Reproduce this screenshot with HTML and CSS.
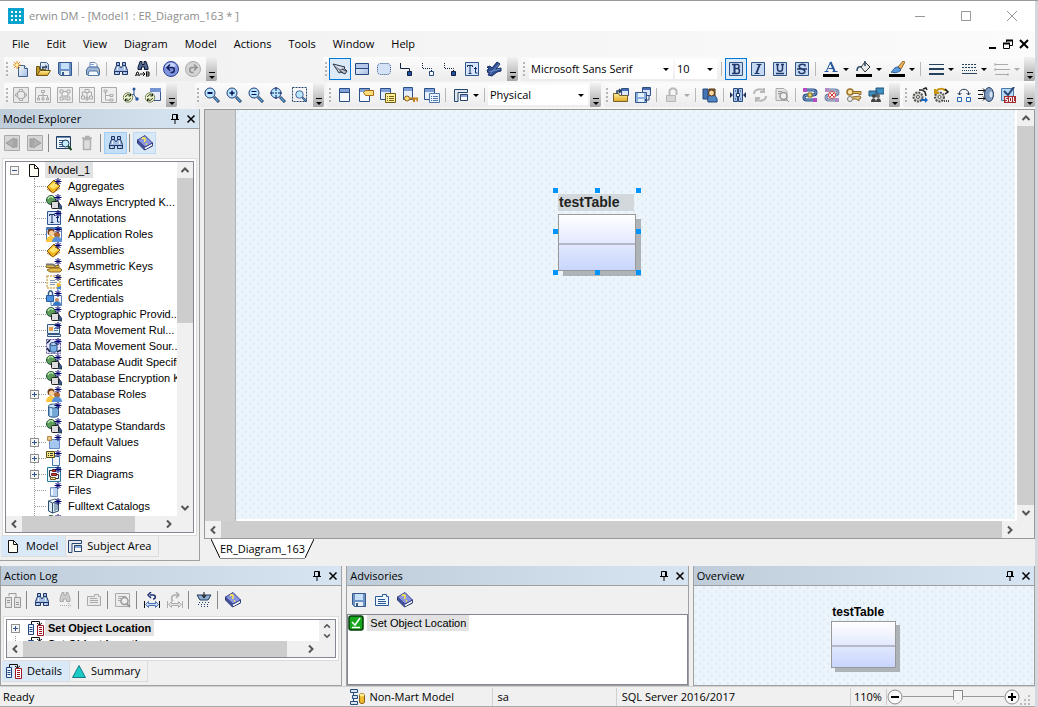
FILE: index.html
```html
<!DOCTYPE html>
<html lang="en">
<head>
<meta charset="utf-8">
<title>erwin DM - [Model1 : ER_Diagram_163 * ]</title>
<link rel="stylesheet" href="styles.css">
</head>
<body>
<svg class="defs" aria-hidden="true">
  <defs>
    <linearGradient id="gb" x1="0" y1="0" x2="1" y2="1"><stop offset="0" stop-color="#f8fbff"/><stop offset="1" stop-color="#a4bce2"/></linearGradient>
    <linearGradient id="gy" x1="0" y1="0" x2="0" y2="1"><stop offset="0" stop-color="#fff0a0"/><stop offset="1" stop-color="#e0a820"/></linearGradient>
  </defs>
  <symbol id="star" viewBox="0 0 16 16"><path d="M12 0v7M8.500 3.500h7M9.500 1l5 5M14.500 1l-5 5" stroke="#00006e" fill="none"/></symbol>
  <symbol id="new" viewBox="0 0 16 16"><path d="M5.500 4.500h6l3 3v8h-9z" fill="url(#gb)" stroke="#41608c"/><path d="M11.500 4.500v3h3" fill="#fff" stroke="#41608c"/><path d="M4 0v8M0 4h8M1 1l6 6M7 1L1 7" stroke="#e08a1c"/><circle cx="4" cy="4" r="1.500" fill="#fff3a0"/></symbol>
  <symbol id="open" viewBox="0 0 16 16"><path d="M5.500 1.500h6l2 2v7h-8z" fill="url(#gb)" stroke="#41608c"/><path d="M1.500 14.500v-9h3v3h6v6z" fill="#c49a28" stroke="#6d5716"/><path d="M2 14.500l3-5h10.500l-3 5z" fill="url(#gy)" stroke="#6d5716"/><path d="M7 8V5.500h3.500V3.500l2 2.500-2 2V6.500" fill="#243c58"/></symbol>
  <symbol id="save" viewBox="0 0 16 16"><path d="M1.500 1.500h13v13h-11l-2-2z" fill="#6d94c4" stroke="#35598c"/><path d="M4 2h8v6H4z" fill="#c6e0fa"/><path d="M4 10h8v4H4z" fill="#e8eef2"/><path d="M5 11h2v3H5z" fill="#35598c"/></symbol>
  <symbol id="print" viewBox="0 0 16 16"><path d="M5 7.500v-6h5l2 2v4" fill="#fff" stroke="#6c8bba"/><path d="M1.500 9l2-3h9.500l1.500 3v4.500h-13z" fill="#9eb7d8" stroke="#4a6898"/><path d="M4 10h8l2 4.500H3z" fill="#f4f8ff" stroke="#587ba8"/><path d="M5 3.500h4M5 5.500h5" stroke="#7ea4d6"/><path d="M13 9.500h1" stroke="#f2c430"/></symbol>
  <symbol id="bino" viewBox="0 0 16 16"><path d="M3.500 1.500h3v3l1 2h1l1-2v-3h3v3l2 5v4H9.500v-3h-3v3h-5v-4l2-5z" fill="#a6bee2" stroke="#1d3565"/><path d="M3.500 4.500h3M9.500 4.500h3M1.500 10.500h5M9.500 10.500h5" stroke="#1d3565"/><path d="M4.500 6v3M11.500 6v3M3.500 12v1M11.500 12v1" stroke="#eef5ff"/></symbol>
  <symbol id="binoab" viewBox="0 0 16 16"><path d="M5 .5h2v3h2v-3h2l2 6v2H9.500V6h-3v2.500H3v-2z" fill="#53688f" stroke="#0b1732"/><path d="M.5 15l1.500-4h1l1.500 4M1 14h3M11.500 10.500v5M11.500 11h2.500v4h-2.500M12 13h2M5 13h4M8 11l2 2-2 2" fill="none" stroke="#111"/></symbol>
  <symbol id="undo" viewBox="0 0 16 16"><circle cx="8" cy="8" r="7.500" fill="#8194dc" stroke="#2d3f94"/><path d="M2 6a6 6 0 0 1 11-1L8 7z" fill="#c5d1f8"/><path d="M4 6.500h5c3 0 3 5 0 5H7.500M7 3.500l-3 3 3 3" fill="none" stroke="#12205f" stroke-width="1.500"/></symbol>
  <symbol id="redo" viewBox="0 0 16 16"><circle cx="8" cy="8" r="7.500" fill="#d4d4d4" stroke="#aaa"/><path d="M12 6.500H7c-3 0-3 5 0 5h1.500M9 3.500l3 3-3 3" fill="none" stroke="#929292" stroke-width="1.500"/></symbol>
  <symbol id="lay1" viewBox="0 0 16 16"><path d="M.5.500h15v15H.5z" fill="#e9e9e9" stroke="#aaa"/><circle cx="8" cy="8" r="4" fill="none" stroke="#aaa" stroke-width="1.500"/><path d="M6.500 2.500h3v2h-3zM6.500 11.500h3v2h-3zM2.500 7h2v2h-2zM11.500 7h2v2h-2z" fill="#eee" stroke="#aaa"/></symbol>
  <symbol id="lay2" viewBox="0 0 16 16"><path d="M.5.500h15v15H.5zM6.500 3.500h3v2h-3zM8 6v5M3.500 11V8.500h9V11M2.500 11h2v2h-2zM7 11h2v2H7zM11.500 11h2v2h-2z" fill="#eee" stroke="#aaa"/></symbol>
  <symbol id="lay3" viewBox="0 0 16 16"><path d="M.5.500h15v15H.5zM3 3h3v3H3zM10 3h3v3h-3zM6 4.500h4M5 6v3h6V6M8 9v2M3 10h3v3H3zM10 10h3v3h-3zM6 12h4" fill="#eee" stroke="#aaa"/></symbol>
  <symbol id="lay4" viewBox="0 0 16 16"><path d="M.5.500h15v15H.5zM6 2.500h4v3H6zM3.500 9V5H6M12.500 9V5H10M2.500 9h3v3h-3zM10.500 9h3v3h-3zM8 6v7M7 10h2v3H7z" fill="#eee" stroke="#aaa"/></symbol>
  <symbol id="lay5" viewBox="0 0 16 16"><path d="M.5.500h15v15H.5zM3 3h3v2H3zM4.500 5v8H9M4.500 8.500H9M9 7.500h3v2H9zM9 12h3v2H9z" fill="#eee" stroke="#aaa"/></symbol>
  <symbol id="cyc1" viewBox="0 0 16 16"><path d="M11 3v5l3 4M11 7L7 9" stroke="#245392" fill="none"/><circle cx="11" cy="2" r="1.500" fill="#2455a0"/><circle cx="14" cy="12" r="1.700" fill="#2455a0"/><circle cx="5" cy="10.500" r="4.700" fill="#eef5cc" stroke="#728055"/><path d="M2.500 10c1-3 4-3 5-1M7.500 7v2H5.500M7.500 11c-1 3-4 3-5 1M2.500 14v-2h2" fill="none" stroke="#162519"/></symbol>
  <symbol id="cyc2" viewBox="0 0 16 16"><path d="M5.500 1.500h10v12h-8" fill="#e6edfc" stroke="#385887"/><path d="M5 1h11v4H5z" fill="#7495cf"/><circle cx="5" cy="10.500" r="4.700" fill="#eef5cc" stroke="#728055"/><path d="M2.500 10c1-3 4-3 5-1M7.500 7v2H5.500M7.500 11c-1 3-4 3-5 1M2.500 14v-2h2" fill="none" stroke="#162519"/></symbol>
  <symbol id="mag" viewBox="0 0 16 16"><path d="M10 10l5 5" stroke="#203754" stroke-width="3"/><path d="M10.500 10.500l4 4" stroke="#5da9e8" stroke-width="1.500"/><circle cx="6" cy="6" r="5" fill="#b9e7ff" stroke="#243c79"/></symbol>
  <symbol id="zout" viewBox="0 0 16 16"><use href="#mag"/><path d="M3.500 6h5" stroke="#07105a" stroke-width="2"/></symbol>
  <symbol id="zin" viewBox="0 0 16 16"><use href="#mag"/><path d="M3.500 6h5M6 3.500v5" stroke="#07105a" stroke-width="1.500"/></symbol>
  <symbol id="zeq" viewBox="0 0 16 16"><use href="#mag"/><path d="M3.500 4.500h5M3.500 7.500h5" stroke="#07105a"/></symbol>
  <symbol id="zcross" viewBox="0 0 16 16"><use href="#mag"/><path d="M0 6h4M8 6h4M6 0v4M6 8v4M5 6h2" stroke="#07105a"/></symbol>
  <symbol id="zarea" viewBox="0 0 16 16"><path d="M.5.500h14v14H.5z" fill="none" stroke="#26456b" stroke-dasharray="2 1"/><g transform="translate(3 3) scale(.75)"><use href="#mag" width="16" height="16"/></g></symbol>
  <symbol id="pointer" viewBox="0 0 16 16"><path d="M1 3l12 3-1 1 3 3-2 3-4-2-2 1z" fill="#c0c4c9" stroke="#26384c"/><path d="M2 4l6 6 4-2z" fill="#777f88"/><path d="M2 4l10 3-4 1z" fill="#eef"/><path d="M8 10l3 2M10 8l4 2" stroke="#26384c"/></symbol>
  <symbol id="entity" viewBox="0 0 16 16"><path d="M1.500 2.500h13v11h-13z" fill="url(#gb)" stroke="#234a82"/><path d="M2 3h12v4H2z" fill="#b5c8ea"/><path d="M1.500 7.500h13" stroke="#234a82"/></symbol>
  <symbol id="round" viewBox="0 0 16 16"><rect x="1.500" y="2.500" width="13" height="11" rx="3" fill="#d4e2f7" stroke="#284b80" stroke-dasharray="1 1"/></symbol>
  <symbol id="rel1" viewBox="0 0 16 16"><path d="M2.500 2v5.500h9V11" fill="none" stroke="#111f40"/><path d="M9.500 10.500h4v4h-4z" fill="#2450a0" stroke="#111f40"/></symbol>
  <symbol id="rel2" viewBox="0 0 16 16"><path d="M2.500 2v5.500h9V11" fill="none" stroke="#111f40" stroke-dasharray="1 1"/><path d="M9.500 10.500h4v4h-4z" fill="#fff" stroke="#234a82"/></symbol>
  <symbol id="rel3" viewBox="0 0 16 16"><path d="M2.500 2v5.500h9V11" fill="none" stroke="#111f40" stroke-dasharray="1 1"/><path d="M9.500 10.500h4v4h-4z" fill="#2450a0" stroke="#111f40"/></symbol>
  <symbol id="tt" viewBox="0 0 16 16"><path d="M1.500 1.500h13v13h-13z" fill="#d7e5fa" stroke="#2f568f"/><path d="M3.500 6V4.500h5V6M6 4v8M4.500 12.500h3M11.500 6v6h2M10 7.500h3" fill="none" stroke="#112e62"/></symbol>
  <symbol id="many" viewBox="0 0 16 16"><path d="M1 6l3-1 2 2 5-6 3 2-4 5 5-1v3l-4 1-5 4-4-1 2-3-2 1-1-3 2-1z" fill="#304f92" stroke="#162d66"/><path d="M4 13l9-10M3 11l11-3" stroke="#6e8dca"/></symbol>
  <symbol id="lv1" viewBox="0 0 16 16"><path d="M3.500 1.500h10v13h-10z" fill="#f5f8ff" stroke="#2b5085"/><path d="M4 2h9v3H4z" fill="#7f9fd8"/><path d="M4 5.500h9" stroke="#2b5085"/></symbol>
  <symbol id="lv2" viewBox="0 0 16 16"><path d="M1.500 1.500h10v13h-10z" fill="#f5f8ff" stroke="#2b5085"/><path d="M2 2h9v3H2z" fill="#7f9fd8"/><path d="M5.500 5.500l2-2h8v5h-8z" fill="#ffdc79" stroke="#a46a16"/></symbol>
  <symbol id="lv3" viewBox="0 0 16 16"><path d="M.5 1.500h10v11H.5z" fill="#e8effc" stroke="#2b5085"/><path d="M1 2h9v3H1z" fill="#7f9fd8"/><path d="M5.500 6.500h10v9h-10z" fill="#fff196" stroke="#6d5a19"/><path d="M7 9.500h1M9 9.500h5M7 11.500h1M9 11.500h5M7 13.500h1M9 13.500h5" stroke="#77611b"/></symbol>
  <symbol id="lv4" viewBox="0 0 16 16"><path d="M1.500.500h9v12h-9z" fill="#e8effc" stroke="#2b5085"/><path d="M2 1h8v3H2z" fill="#7f9fd8"/><circle cx="5" cy="11.500" r="2.500" fill="#ffe07a" stroke="#8e5c12"/><path d="M7.500 11.500h8v3M12 12v3" stroke="#bf7e18" fill="none" stroke-width="2"/></symbol>
  <symbol id="lv5" viewBox="0 0 16 16"><path d="M.5 1.500h10v11H.5z" fill="#e8effc" stroke="#2b5085"/><path d="M1 2h9v3H1z" fill="#7f9fd8"/><path d="M5.500 6.500h10v9h-10z" fill="#eaf3ff" stroke="#5277a5"/><path d="M7 9.500h1M9 9.500h5M7 11.500h1M9 11.500h5M7 13.500h1M9 13.500h5" stroke="#5277a5"/></symbol>
  <symbol id="subj" viewBox="0 0 16 16"><path d="M1.500 14.500v-12h13v3H5v9z" fill="#e2eaf4" stroke="#27456b"/><path d="M7.500 7.500h7v6h-7z" fill="#8eaadc" stroke="#27456b"/><path d="M8 10h6v3H8z" fill="#fff"/></symbol>
  <symbol id="mart1" viewBox="0 0 16 16"><path d="M8.500 1.500h7v7h-7z" fill="#dbe7ff" stroke="#305083"/><path d="M9 2h6v2H9z" fill="#456cb2"/><path d="M.5 14.500v-8h5l1 2h8v6z" fill="url(#gy)" stroke="#77602a"/><path d="M4 7V4h4M6 2l2 2-2 2" fill="none" stroke="#253e62" stroke-width="1.500"/></symbol>
  <symbol id="mart2" viewBox="0 0 16 16"><path d="M7.500.500h8v8h-8z" fill="#dbe7ff" stroke="#305083"/><path d="M8 1h7v2H8z" fill="#456cb2"/><path d="M.5 5.500h11v10H.5z" fill="#8fb0dc" stroke="#35598c"/><path d="M3 6h6v4H3zM3 12h6v3H3z" fill="#e4f1ff"/><path d="M14 9v4h-4M12 11l-2 2 2 2" fill="none" stroke="#294b7d"/></symbol>
  <symbol id="lock" viewBox="0 0 16 16"><path d="M5.500 8V3.500l2-2h3l2 2V8" fill="none" stroke="#bbb" stroke-width="2"/><path d="M2.500 8.500h9v6h-9z" fill="#d7d7d7" stroke="#b7b7b7"/></symbol>
  <symbol id="dbuser" viewBox="0 0 16 16"><path d="M1 2h5v10H1z" fill="#4675b5" stroke="#234675"/><path d="M7 2h6v8H7z" fill="#b87b32" stroke="#4d3012"/><path d="M6 15c-1-5 0-6 3-7s7 2 6 7z" fill="#5186c4" stroke="#224472"/><circle cx="9.500" cy="6" r="3" fill="#ffd8a4" stroke="#4d3012"/></symbol>
  <symbol id="compare" viewBox="0 0 16 16"><path d="M3.500 1.500h4v13h-4zM8.500 1.500h4v13h-4z" fill="#a9c3ec" stroke="#284878"/><path d="M0 5l3 3-3 3M16 5l-3 3 3 3" fill="#1f3558"/><path d="M6.500 6.500h3v3h-3z" fill="#fff" stroke="#183769"/><path d="M5 4h1M10 4h1M5 12h1M10 12h1" stroke="#183769"/></symbol>
  <symbol id="sync" viewBox="0 0 16 16"><path d="M2 7c0-5 7-6 10-3M12 1v4H8M14 9c0 5-7 6-10 3M4 15v-4h4" fill="none" stroke="#b8b8b8" stroke-width="2"/></symbol>
  <symbol id="preview" viewBox="0 0 16 16"><path d="M2 1.500h8l3 3v9H2z" fill="#e5e5e5" stroke="#aaa"/><circle cx="9.500" cy="9" r="3.500" fill="#efefef" stroke="#999" stroke-width="1.500"/><path d="M12 12l3 3M4 4.500h4M4 6.500h3" stroke="#999"/></symbol>
  <symbol id="flow" viewBox="0 0 16 16"><path d="M3 3h8c4 0 4 5 0 5H5c-4 0-4 5 0 5h8" fill="none" stroke="#25497e" stroke-width="3"/><path d="M3 3h8c4 0 4 5 0 5H5c-4 0-4 5 0 5h8" fill="none" stroke="#91b8eb"/><path d="M1 1h4v4H1zM11 11h4v4h-4z" fill="#b44cc2"/><path d="M6 6h4v4H6z" fill="#ead761" stroke="#796827"/></symbol>
  <symbol id="flowx" viewBox="0 0 16 16"><path d="M3 3h8c4 0 4 5 0 5H5c-4 0-4 5 0 5h8" fill="none" stroke="#6e7fa5" stroke-width="3"/><path d="M3 3h8c4 0 4 5 0 5H5c-4 0-4 5 0 5h8" fill="none" stroke="#b9c8e0"/><path d="M1 1h4v4H1zM11 11h4v4h-4z" fill="#b48ac0"/><circle cx="8" cy="8" r="3.500" fill="#fff" stroke="#d5312d"/><path d="M6 6l4 4M10 6l-4 4" stroke="#d5312d"/></symbol>
  <symbol id="keys" viewBox="0 0 16 16"><circle cx="4" cy="5" r="3" fill="#f8e0a0" stroke="#9b7429" stroke-width="1.500"/><path d="M7 4.500h8v3h-2v-1H7" fill="#e4bc50" stroke="#8a6830"/><circle cx="4" cy="12" r="2.500" fill="#eee" stroke="#777"/><path d="M6 10l8-1 1 2-2 1v2l-3-2H6" fill="#e2c070" stroke="#886b36"/></symbol>
  <symbol id="users" viewBox="0 0 16 16"><path d="M1 4h8v5H1zM8 1h8v6H8z" fill="#3c8dc0" stroke="#285678"/><circle cx="6" cy="9" r="2" fill="#444"/><circle cx="10" cy="9" r="2" fill="#666"/><path d="M3 15c0-5 5-5 5 0M8 15c0-5 5-5 5 0" fill="#444"/></symbol>
  <symbol id="gear1" viewBox="0 0 16 16"><circle cx="6" cy="10" r="4.500" fill="#d3d3cd" stroke="#535353" stroke-width="2" stroke-dasharray="2 1"/><circle cx="6" cy="10" r="1.500" fill="#fff" stroke="#555"/><path d="M7 3h3l3 2 1 4M11 2l3-1 1 2" fill="none" stroke="#222" stroke-width="1.500"/><path d="M9 12h4v-2l3 3-3 3v-2H9z" fill="#1664c3"/></symbol>
  <symbol id="gear2" viewBox="0 0 16 16"><circle cx="5.500" cy="10" r="4.500" fill="#d3d3cd" stroke="#535353" stroke-width="2" stroke-dasharray="2 1"/><circle cx="5.500" cy="10" r="1.500" fill="#fff" stroke="#555"/><path d="M2 5c1-4 8-4 9-1M1 2v4h4" fill="none" stroke="#c8940d" stroke-width="2"/><path d="M11 2l3 3-3 2M10 14h1M12 14h1M14 14h1" stroke="#111" fill="none" stroke-width="1.500"/></symbol>
  <symbol id="link" viewBox="0 0 16 16"><path d="M3.500 8V6c0-5 9-5 9 0v2M3.500 8l-2-2M3.500 8l2-2M12.500 8l-2-2M12.500 8l2-2" fill="none" stroke="#25385b"/><path d="M1.500 10.500h4v4h-4zM10.500 10.500h4v4h-4z" fill="#f3f8ff" stroke="#2667b2"/></symbol>
  <symbol id="fwd" viewBox="0 0 16 16"><path d="M0 3.500h7M0 7.500h5M0 11.500h7M5 1.500l2 2-2 2M5 9.500l2 2-2 2" stroke="#111" fill="none"/><ellipse cx="11" cy="7.500" rx="4.500" ry="7" fill="#7f9cc0" stroke="#263c60"/><ellipse cx="13" cy="7.500" rx="1.500" ry="3" fill="#d7e4f4"/></symbol>
  <symbol id="sql" viewBox="0 0 16 16"><path d="M1.500 1.500h12v12h-12z" fill="#b5d8f3" stroke="#4879a9"/><path d="M4 4l4 4 6-8" fill="none" stroke="#294774" stroke-width="2"/><path d="M4 9h12v7H4z" fill="#a72c31"/><path d="M7.500 10.500h-2v2h2v2h-2M9.500 10.500h2v4h-2zM13.500 10v4.500H15" fill="none" stroke="#fff"/></symbol>
  <symbol id="bold" viewBox="0 0 16 16"><path d="M1.500 1.500h13v13h-13z" fill="#c7d8f3" stroke="#315789"/><path d="M6.500 4v8" stroke="#1d3868" stroke-width="2"/><path d="M4 3.500h5.500c2 0 2 4 0 4H7M9.500 7.500c2.500 0 2.500 5 0 5H4" fill="none" stroke="#1d3868" stroke-width="1.500"/></symbol>
  <symbol id="ital" viewBox="0 0 16 16"><path d="M1.500 1.500h13v13h-13z" fill="#c7d8f3" stroke="#315789"/><path d="M6.500 3.500h5M4.500 12.500h5" stroke="#1d3868"/><path d="M9.500 4l-3 8" stroke="#1d3868" stroke-width="2"/></symbol>
  <symbol id="under" viewBox="0 0 16 16"><path d="M1.500 1.500h13v13h-13z" fill="#c7d8f3" stroke="#315789"/><path d="M4 3.500h3M9 3.500h3M5.500 4v4c0 3 5 3 5 0V4M4 12.500h8" fill="none" stroke="#1d3868" stroke-width="1.500"/></symbol>
  <symbol id="strike" viewBox="0 0 16 16"><path d="M1.500 1.500h13v13h-13z" fill="#c7d8f3" stroke="#315789"/><path d="M11 5.500V4c-2-1-6-1-6 1.500C5 8 11 8 11 10.500c0 2-4 3-6 1V10M3 8h10" fill="none" stroke="#1d3868" stroke-width="1.500"/></symbol>
  <symbol id="fcol" viewBox="0 0 16 16"><path d="M1.500 10.500h4M9.500 10.500h5M5.500 7.500h5" stroke="#25569c"/><path d="M3.500 10l4-9" stroke="#25569c" fill="none"/><path d="M7.500 1l4 9" stroke="#25569c" fill="none" stroke-width="2"/><path d="M0 13h16v3H0z"/></symbol>
  <symbol id="fill" viewBox="0 0 16 16"><path d="M5 6l4-5 5 5-5 5z" fill="#e8eaec" stroke="#333"/><path d="M6 6c-3-1-5 0-5 4M9 5V0" fill="none" stroke="#26445f" stroke-width="1.500"/><path d="M0 13h16v3H0z"/></symbol>
  <symbol id="brush" viewBox="0 0 16 16"><path d="M9 6l5-6 2 1-4 7z" fill="#e4b05c" stroke="#9b6d2b"/><path d="M2 11c2 0 2-5 7-5l3 3c-3 3-6 3-10 2z" fill="#5b9bdd" stroke="#275793"/><path d="M0 13h16v3H0z"/></symbol>
  <symbol id="ln1" viewBox="0 0 16 16"><path d="M1 3.500h15" stroke="#24415e"/><path d="M1 8h15M1 13h15" stroke="#24415e" stroke-width="2"/></symbol>
  <symbol id="ln2" viewBox="0 0 16 16"><path d="M1 3.500h15M1 6.500h15" stroke="#24415e" stroke-dasharray="2 1"/><path d="M1 9.500h15" stroke="#24415e" stroke-dasharray="1 1"/><path d="M1 12.500h15" stroke="#24415e"/></symbol>
  <symbol id="ln3" viewBox="0 0 16 16"><path d="M1 3.500h13M1 8.500h15M1 13.500h13M1 2v3M1 7v3M14 12v3" stroke="#aaa"/></symbol>
  <symbol id="prev" viewBox="0 0 16 16"><path d="M.5.500h15v15H.5z" fill="#d6d6d6" stroke="#aaa"/><path d="M2 8l8-5v10zM11 4h2v8h-2z" fill="#b0b0b0" stroke="#999"/></symbol>
  <symbol id="next" viewBox="0 0 16 16"><path d="M.5.500h15v15H.5z" fill="#d6d6d6" stroke="#aaa"/><path d="M14 8L6 3v10zM3 4h2v8H3z" fill="#b0b0b0" stroke="#999"/></symbol>
  <symbol id="props" viewBox="0 0 16 16"><path d="M.5 1.500h14v12H.5z" fill="#f2f7ff" stroke="#223e65"/><path d="M1 2h13v1H1z" fill="#6588b6"/><path d="M3 5.500h8M3 7.500h4M3 9.500h3M3 11.500h4" stroke="#365c8f"/><circle cx="9.500" cy="8.500" r="3.500" fill="#c6edff" stroke="#1d344f"/><path d="M12 11l3.500 4" stroke="#1d4a22" stroke-width="2"/></symbol>
  <symbol id="trash" viewBox="0 0 16 16"><path d="M3 3h10M6 1.500h4v1M4.500 4.500h7v10h-7z" fill="#ddd" stroke="#b1b1b1" stroke-width="1.500"/></symbol>
  <symbol id="book" viewBox="0 0 16 16"><path d="M.5 5v3l7 7 8-4V8z" fill="#4652a0" stroke="#25366e"/><path d="M8 13.500l7-4" stroke="#fff" stroke-width="1.500"/><path d="M.5 5L8 .5 15.500 8 8 12z" fill="#8a95e0" stroke="#3a478c"/><path d="M5 4c1-2 4-1 3 1L7.500 7M9 8.500l1 1" stroke="#ffec40" fill="none" stroke-width="1.500"/></symbol>
  <symbol id="page" viewBox="0 0 16 16"><path d="M3.500 2.500h5l4 4v8h-9z" fill="#fffef5" stroke="#111"/><path d="M8.500 2.500v4h4" fill="none" stroke="#111"/></symbol>
  <symbol id="diamond" viewBox="0 0 16 16"><path d="M1 9l7-7 6 6-7 7z" fill="#f2b51f" stroke="#835814"/><path d="M3 8l5-4 4 4-5 3z" fill="#ffe56d"/><path d="M1 11l6 4 7-5" stroke="#b47912" fill="none"/><use href="#star"/></symbol>
  <symbol id="shapes" viewBox="0 0 16 16"><circle cx="5" cy="6" r="4.500" fill="#5b9c58" stroke="#234c33"/><path d="M2 5c1-3 4-3 5-1" stroke="#c3e8b2" fill="none" stroke-width="1.500"/><path d="M8 14l3-8 5 7v2z" fill="#355980" stroke="#1d3552"/><rect x="5.500" y="7.500" width="7" height="7" rx="1" fill="#ddd" stroke="#222"/><use href="#star"/></symbol>
  <symbol id="tts" viewBox="0 0 16 16"><use href="#tt"/><use href="#star"/></symbol>
  <symbol id="person" viewBox="0 0 16 16"><circle cx="5" cy="6" r="3.500" fill="#6d3b18"/><circle cx="5.500" cy="7" r="2.500" fill="#ffd09b"/><circle cx="11" cy="9" r="3" fill="#b16732"/><path d="M0 16c0-8 10-8 10 0z" fill="#ffc83c"/><path d="M6 16c0-7 10-7 10 0z" fill="#5a91db"/></symbol>
  <symbol id="approle" viewBox="0 0 16 16"><path d="M.5 1.500h15v13H.5z" fill="#fff" stroke="#4f79b7"/><path d="M1 2h14v2H1z" fill="#467fd1"/><use href="#person"/><use href="#star"/></symbol>
  <symbol id="role" viewBox="0 0 16 16"><use href="#person"/><use href="#star"/></symbol>
  <symbol id="keyt" viewBox="0 0 16 16"><path d="M0 6.500h7l2 1h4v2H0zM1 12l4-2h9l2 2-2 2H4z" fill="#e3ba43" stroke="#8d6a26"/><path d="M0 6.500h7l3 2" stroke="#777" stroke-width="2" fill="none"/><use href="#star"/></symbol>
  <symbol id="cert" viewBox="0 0 16 16"><path d="M1 2h13v12H1z" fill="#fffbea" stroke="#d0b16e" stroke-width="1.500" stroke-dasharray="2 1"/><path d="M4 6.500h5M4 8.500h7M4 10.500h5" stroke="#8096bb"/><path d="M10 12h1v4l2-1 2 1v-4" fill="#438bdb"/><circle cx="12.500" cy="11" r="2" fill="#f0b52b"/><use href="#star"/></symbol>
  <symbol id="cred" viewBox="0 0 16 16"><path d="M5 5.500h10.500v10H5z" fill="#eef5ff" stroke="#5b80b3"/><path d="M2.500 6V3l1-2h2l1 2v3" fill="none" stroke="#345884" stroke-width="1.500"/><path d="M.5 5.500h7v6h-7z" fill="#4e91de" stroke="#285b9c"/><circle cx="11" cy="10" r="2" fill="#ce8d54"/><path d="M7 15c0-5 8-5 8 0z" fill="#3478c6"/><use href="#star"/></symbol>
  <symbol id="rule" viewBox="0 0 16 16"><path d="M1.500 2.500h12v9h-12zM1.500 12.500h13v2h-13z" fill="#e1effd" stroke="#34577f"/><path d="M3 5h4v4H3z" fill="#ea9e43"/><path d="M8 6.500h4M8 8.500h4" stroke="#577da6"/><use href="#star"/></symbol>
  <symbol id="source" viewBox="0 0 16 16"><path d="M.5 1.500h14v14H.5z" fill="#e8e3ff" stroke="#665a9b" stroke-dasharray="2 1"/><path d="M4 6v6c0 3 7 3 7 0V6" fill="#78afe4" stroke="#234777"/><ellipse cx="7.500" cy="6" rx="3.500" ry="1.500" fill="#bddcf5" stroke="#234777"/><path d="M1 5l3-3M1 10l3 4M11 14l4-2" stroke="#102344" stroke-width="1.500"/><use href="#star"/></symbol>
  <symbol id="db" viewBox="0 0 16 16"><path d="M2.500 4v9c0 3 10 3 10 0V4" fill="#74a8d6" stroke="#345d87"/><path d="M5 5v9" stroke="#c0e1f7" stroke-width="2"/><ellipse cx="7.500" cy="4" rx="5" ry="2" fill="#c7e3f5" stroke="#345d87"/><use href="#star"/></symbol>
  <symbol id="defv" viewBox="0 0 16 16"><path d="M3.500 5.500h10v9h-10z" fill="#a5c7ef" stroke="#668dbd"/><path d="M1.500 2.500h4v4h-4z" fill="#e7bf7c" stroke="#b08a54"/><use href="#star"/></symbol>
  <symbol id="domain" viewBox="0 0 16 16"><path d="M6.500 6.500h7v9h-7z" fill="#eef5ff" stroke="#4d78ad"/><path d="M.5 1.500h8v6h-8z" fill="#f3e37e" stroke="#595115"/><path d="M2 3.500h1M4 3.500h3M2 5.500h1M4 5.500h3" stroke="#333"/><use href="#star"/></symbol>
  <symbol id="erd" viewBox="0 0 16 16"><path d="M1.500 1.500h13v14h-13z" fill="#e7f4ff" stroke="#287998"/><path d="M6 4.500H3.500v6H5M11 8.500h1.500v4H10" fill="none" stroke="#333"/><path d="M6.500 3.500h3v2h-3zM5.500 7.500h5v2h-5z" fill="#cd3d35" stroke="#721919"/><path d="M4.500 11.500h5v2h-5z" fill="#f4e4b0" stroke="#6e5716"/><use href="#star"/></symbol>
  <symbol id="file" viewBox="0 0 16 16"><path d="M4.500 5.500h7v9h-7z" fill="#bdd5f3" stroke="#7594bb"/><path d="M5 7h2v6H5z" fill="#f3f8ff"/><use href="#star"/></symbol>
  <symbol id="catalog" viewBox="0 0 16 16"><path d="M2.500 3l4 2v10l-4-2zM6.500 5l6-2v10l-6 2z" fill="#dceaf6" stroke="#2c4e68"/><path d="M2.500 3L9 1l4 2M9 5v8M11 4v8" fill="none" stroke="#4b6d86"/><use href="#star"/></symbol>
  <symbol id="objs" viewBox="0 0 16 16"><path d="M3.500 4V1.500h8V5M9 3l2.500 2L14 3" fill="none" stroke="#111"/><path d="M.5 4.500h5v10h-5z" fill="#edf4ff" stroke="#1e4481"/><path d="M1.500 7.500h3M1.500 9.500h3M1.500 11.500h3" stroke="#1e4481"/><path d="M9.500 5.500h6v10h-6z" fill="#fff" stroke="#a11720"/><path d="M11 7.500h3M11 9.500h3M11 11.500h3M11 13.500h3" stroke="#a11720"/></symbol>
  <symbol id="gobjs" viewBox="0 0 16 16"><path d="M4 4V1.500h7V5" fill="none" stroke="#999"/><path d="M.5 5.500h6v10h-6zM9.500 5.500h6v10h-6z" fill="#e4e4e4" stroke="#999"/><path d="M2 8.500h3M2 10.500h3M11 10.500h3M11 12.500h3" stroke="#999"/></symbol>
  <symbol id="gbino" viewBox="0 0 16 16"><path d="M5 .5h2v3h2v-3h2l2 6v3H9.500V7h-3v2.500H3v-3z" fill="#ccc" stroke="#aaa"/><path d="M3 13.500h9M11 11l3 2.500-3 2" stroke="#aaa" stroke-dasharray="1 1" fill="none"/></symbol>
  <symbol id="gcard" viewBox="0 0 16 16"><path d="M1.500 4.500h7v-2h4v2h2v9h-13z" fill="#eaeaea" stroke="#aaa"/><path d="M4 6.500h7M4 8.500h8M4 10.500h8" stroke="#aaa"/></symbol>
  <symbol id="card" viewBox="0 0 16 16"><path d="M1.500 4.500h7v-2h4v2h2v9h-13z" fill="#edf6ff" stroke="#285994"/><path d="M4 7.500h7M4 9.500h8M4 11.500h8" stroke="#285994"/></symbol>
  <symbol id="gprev" viewBox="0 0 16 16"><path d="M.5 1.500h14v13H.5z" fill="#ececec" stroke="#aaa"/><path d="M3 4.500h8M3 6.500h3M3 8.500h3" stroke="#aaa"/><circle cx="9.500" cy="9" r="3.500" fill="#eee" stroke="#999" stroke-width="1.500"/><path d="M12 12l3 3" stroke="#999" stroke-width="2"/></symbol>
  <symbol id="back" viewBox="0 0 16 16"><path d="M6 3h3c3 0 3 4 0 4M7 0L4 3l3 3" fill="none" stroke="#1b2d74" stroke-width="1.500"/><path d="M.5 9v7M15.500 9v7" stroke="#111"/><path d="M1.500 12.500l3-3v2h7v-2l3 3-3 3v-2h-7v2z" stroke="#4a70b5" fill="#c8daf4"/></symbol>
  <symbol id="ahead" viewBox="0 0 16 16"><path d="M11 3H8c-4 0-4 5-2 6M9 0l3 3-3 3" fill="none" stroke="#adadad" stroke-width="1.500"/><path d="M.5 9v7M15.500 9v7M1.500 12.500l3-3v2h7v-2l3 3-3 3v-2h-7v2z" stroke="#adadad" fill="#e2e2e2"/></symbol>
  <symbol id="spray" viewBox="0 0 16 16"><path d="M1 3h14l-3 5H4z" fill="#8daed2" stroke="#213d5c"/><path d="M8 0v5M6 3l2 3 2-3" stroke="#111" fill="none"/><path d="M3 10.500h10M2 12.500h12M5 14.500h7" stroke="#24436c" stroke-dasharray="1 2"/></symbol>
  <symbol id="check" viewBox="0 0 16 16"><rect x="1" y="1" width="14" height="14" rx="2" fill="#18a61d" stroke="#063b08" stroke-width="1.500"/><path d="M4 7l3 3 5-7M4 12.500h8" fill="none" stroke="#fff" stroke-width="1.500"/></symbol>
  <symbol id="tri" viewBox="0 0 16 16"><path d="M8 2.500l6.500 12h-13z" fill="#18cbc5" stroke="#187a86"/></symbol>
  <symbol id="model" viewBox="0 0 16 16"><path d="M.5.500h7v3h-7zM.5 12.500h7v3h-7zM2.500 6.500h5v3h-5z" fill="#d8e4f4" stroke="#274b79"/><path d="M3.500 4v2M3.500 10v2" stroke="#274b79"/><path d="M9.500 6c0-2 5-2 5 0v7c0 2-5 2-5 0z" fill="#efba2d" stroke="#8b6112"/><ellipse cx="12" cy="6" rx="2.500" ry="1.500" fill="#ffeb92"/></symbol>
  <symbol id="logo" viewBox="0 0 16 16"><path d="M0 0h16v16H0z" fill="#08a2cc"/><path d="M3 3h2v2H3zM7 3h2v2H7zM11 3h2v2h-2zM3 7h2v2H3zM7 7h2v2H7zM11 7h2v2h-2zM3 11h2v2H3zM7 11h2v2H7zM11 11h2v2h-2z" fill="#fff"/></symbol>
  <symbol id="pin" viewBox="0 0 10 10"><path d="M2.500.500h5v5h-5zM1 5.500h8M5 6v4M6.500 1v4" fill="none" stroke="#000"/></symbol>
  <symbol id="x" viewBox="0 0 10 10"><path d="M1.500 1.500l7 7M8.500 1.500l-7 7" stroke="#000" stroke-width="1.500"/></symbol>
  <symbol id="min" viewBox="0 0 12 12"><path d="M1 6.500h10" stroke="#999"/></symbol>
  <symbol id="max" viewBox="0 0 12 12"><path d="M1.500 1.500h9v9h-9z" fill="none" stroke="#999"/></symbol>
  <symbol id="close" viewBox="0 0 12 12"><path d="M1 1l10 10M11 1L1 11" stroke="#999"/></symbol>
  <symbol id="mmin" viewBox="0 0 10 10"><path d="M2 9h7" stroke="#000" stroke-width="2"/></symbol>
  <symbol id="mres" viewBox="0 0 10 10"><path d="M3.500 3V1.500h6v5H7M.5 4.500h6v5h-6z" fill="none" stroke="#000"/><path d="M3 1.500h7M0 4.500h7" stroke="#000" stroke-width="2"/></symbol>
  <symbol id="mx" viewBox="0 0 10 10"><path d="M1 1l8 8M9 1L1 9" stroke="#000" stroke-width="2"/></symbol>
  <symbol id="up" viewBox="0 0 10 10"><path d="M1.500 7L5 3.500 8.500 7" fill="none" stroke="#555" stroke-width="2"/></symbol>
  <symbol id="down" viewBox="0 0 10 10"><path d="M1.500 3L5 6.500 8.500 3" fill="none" stroke="#555" stroke-width="2"/></symbol>
  <symbol id="left" viewBox="0 0 10 10"><path d="M7 1.500L3.500 5 7 8.500" fill="none" stroke="#555" stroke-width="2"/></symbol>
  <symbol id="right" viewBox="0 0 10 10"><path d="M3 1.500L6.500 5 3 8.500" fill="none" stroke="#555" stroke-width="2"/></symbol>
  <symbol id="more" viewBox="0 0 10 10"><path d="M2 1.500h6" stroke="#000"/><path d="M2 5h6L5 8z"/></symbol>
</svg>

<header class="titlebar">
  <svg class="icon"><use href="#logo"/></svg>
  <h1 class="app-title">erwin DM - [Model1 : ER_Diagram_163 * ]</h1>
  <div class="window-buttons">
    <button aria-label="Minimize"><svg><use href="#min"/></svg></button>
    <button aria-label="Maximize"><svg><use href="#max"/></svg></button>
    <button aria-label="Close"><svg><use href="#close"/></svg></button>
  </div>
</header>

<nav class="menubar">
  <button>File</button><button>Edit</button><button>View</button><button>Diagram</button><button>Model</button><button>Actions</button><button>Tools</button><button>Window</button><button>Help</button>
  <div class="child-buttons">
    <button aria-label="Minimize diagram"><svg><use href="#mmin"/></svg></button>
    <button aria-label="Restore diagram"><svg><use href="#mres"/></svg></button>
    <button aria-label="Close diagram"><svg><use href="#mx"/></svg></button>
  </div>
</nav>

<div class="toolbar-row">
  <div class="toolbar">
    <button class="tool" aria-label="New"><svg><use href="#new"/></svg></button>
    <button class="tool" aria-label="Open"><svg><use href="#open"/></svg></button>
    <button class="tool" aria-label="Save"><svg><use href="#save"/></svg></button>
    <span class="sep"></span>
    <button class="tool" aria-label="Print"><svg><use href="#print"/></svg></button>
    <span class="sep"></span>
    <button class="tool" aria-label="Find"><svg><use href="#bino"/></svg></button>
    <button class="tool" aria-label="Replace"><svg><use href="#binoab"/></svg></button>
    <span class="sep"></span>
    <button class="tool" aria-label="Undo"><svg><use href="#undo"/></svg></button>
    <button class="tool" aria-label="Redo"><svg><use href="#redo"/></svg></button>
    <button class="more" aria-label="More standard tools"><svg><use href="#more"/></svg></button>
  </div>
  <div class="toolbar after-break">
    <button class="tool picked" aria-label="Select"><svg><use href="#pointer"/></svg></button>
    <button class="tool" aria-label="Table"><svg><use href="#entity"/></svg></button>
    <button class="tool" aria-label="View table"><svg><use href="#round"/></svg></button>
    <button class="tool" aria-label="Identifying relationship"><svg><use href="#rel1"/></svg></button>
    <button class="tool" aria-label="View relationship"><svg><use href="#rel2"/></svg></button>
    <button class="tool" aria-label="Non-identifying relationship"><svg><use href="#rel3"/></svg></button>
    <button class="tool" aria-label="Annotation"><svg><use href="#tt"/></svg></button>
    <button class="tool" aria-label="Drawing object"><svg><use href="#many"/></svg></button>
    <button class="more" aria-label="More toolbox tools"><svg><use href="#more"/></svg></button>
  </div>
  <div class="toolbar fill">
    <span class="combo font-combo"><select aria-label="Font"><option>Microsoft Sans Serif</option></select></span>
    <span class="combo size-combo"><select aria-label="Font size"><option>10</option></select></span>
    <span class="sep"></span>
    <button class="tool picked" aria-label="Bold"><svg><use href="#bold"/></svg></button>
    <button class="tool" aria-label="Italic"><svg><use href="#ital"/></svg></button>
    <button class="tool" aria-label="Underline"><svg><use href="#under"/></svg></button>
    <button class="tool" aria-label="Strikethrough"><svg><use href="#strike"/></svg></button>
    <span class="sep"></span>
    <button class="tool drop" aria-label="Text color"><svg><use href="#fcol"/></svg></button>
    <button class="tool drop" aria-label="Fill color"><svg><use href="#fill"/></svg></button>
    <button class="tool drop" aria-label="Line color"><svg><use href="#brush"/></svg></button>
    <span class="sep"></span>
    <button class="tool drop" aria-label="Line width"><svg><use href="#ln1"/></svg></button>
    <button class="tool drop" aria-label="Line style"><svg><use href="#ln2"/></svg></button>
    <button class="tool drop off" aria-label="Line ends"><svg><use href="#ln3"/></svg></button>
    <button class="more" aria-label="More format tools"><svg><use href="#more"/></svg></button>
  </div>
</div>

<div class="toolbar-row">
  <div class="toolbar">
    <button class="tool" aria-label="Circular layout"><svg><use href="#lay1"/></svg></button>
    <button class="tool" aria-label="Hierarchic layout"><svg><use href="#lay2"/></svg></button>
    <button class="tool" aria-label="Organic layout"><svg><use href="#lay3"/></svg></button>
    <button class="tool" aria-label="Orthogonal layout"><svg><use href="#lay4"/></svg></button>
    <button class="tool" aria-label="Tree layout"><svg><use href="#lay5"/></svg></button>
    <button class="tool" aria-label="Refresh relationships"><svg><use href="#cyc1"/></svg></button>
    <button class="tool" aria-label="Refresh tables"><svg><use href="#cyc2"/></svg></button>
    <button class="more" aria-label="More layout tools"><svg><use href="#more"/></svg></button>
  </div>
  <div class="toolbar after-gap">
    <button class="tool" aria-label="Zoom out"><svg><use href="#zout"/></svg></button>
    <button class="tool" aria-label="Zoom in"><svg><use href="#zin"/></svg></button>
    <button class="tool" aria-label="Normal size"><svg><use href="#zeq"/></svg></button>
    <button class="tool" aria-label="Fit model"><svg><use href="#zcross"/></svg></button>
    <button class="tool" aria-label="Fit selection"><svg><use href="#zarea"/></svg></button>
    <button class="more" aria-label="More zoom tools"><svg><use href="#more"/></svg></button>
  </div>
  <div class="toolbar">
    <button class="tool" aria-label="Table level"><svg><use href="#lv1"/></svg></button>
    <button class="tool" aria-label="Comment level"><svg><use href="#lv2"/></svg></button>
    <button class="tool" aria-label="Column level"><svg><use href="#lv3"/></svg></button>
    <button class="tool" aria-label="Key level"><svg><use href="#lv4"/></svg></button>
    <button class="tool" aria-label="Definition level"><svg><use href="#lv5"/></svg></button>
    <span class="sep"></span>
    <button class="tool drop" aria-label="Subject area"><svg><use href="#subj"/></svg></button>
    <span class="sep"></span>
    <span class="combo view-combo"><select aria-label="Model view"><option>Physical</option></select></span>
    <button class="more" aria-label="More view tools"><svg><use href="#more"/></svg></button>
  </div>
  <div class="toolbar">
    <button class="tool" aria-label="Open from mart"><svg><use href="#mart1"/></svg></button>
    <button class="tool" aria-label="Save to mart"><svg><use href="#mart2"/></svg></button>
    <span class="sep"></span>
    <button class="tool drop off" aria-label="Lock"><svg><use href="#lock"/></svg></button>
    <span class="sep"></span>
    <button class="tool" aria-label="Session"><svg><use href="#dbuser"/></svg></button>
    <span class="sep"></span>
    <button class="tool" aria-label="Compare"><svg><use href="#compare"/></svg></button>
    <button class="tool" aria-label="Refresh"><svg><use href="#sync"/></svg></button>
    <button class="tool" aria-label="Review changes"><svg><use href="#preview"/></svg></button>
    <span class="sep"></span>
    <button class="tool" aria-label="Merge"><svg><use href="#flow"/></svg></button>
    <button class="tool" aria-label="Discard merge"><svg><use href="#flowx"/></svg></button>
    <button class="tool" aria-label="Permissions"><svg><use href="#keys"/></svg></button>
    <button class="tool" aria-label="Sessions"><svg><use href="#users"/></svg></button>
    <button class="more" aria-label="More mart tools"><svg><use href="#more"/></svg></button>
  </div>
  <div class="toolbar fill">
    <button class="tool" aria-label="Forward engineer"><svg><use href="#gear1"/></svg></button>
    <button class="tool" aria-label="Reverse engineer"><svg><use href="#gear2"/></svg></button>
    <button class="tool" aria-label="Complete compare"><svg><use href="#link"/></svg></button>
    <button class="tool" aria-label="Connect database"><svg><use href="#fwd"/></svg></button>
    <button class="tool" aria-label="Query tool"><svg><use href="#sql"/></svg></button>
    <button class="more" aria-label="More database tools"><svg><use href="#more"/></svg></button>
  </div>
</div>

<main class="workspace">
  <section class="panel explorer">
    <header class="panel-head"><h2>Model Explorer</h2><button aria-label="Pin"><svg><use href="#pin"/></svg></button><button aria-label="Close"><svg><use href="#x"/></svg></button></header>
    <div class="panel-tools">
      <button aria-label="Back"><svg><use href="#prev"/></svg></button>
      <button aria-label="Forward"><svg><use href="#next"/></svg></button>
      <span class="sep dark"></span>
      <button aria-label="Properties"><svg><use href="#props"/></svg></button>
      <button aria-label="Delete"><svg><use href="#trash"/></svg></button>
      <span class="sep dark"></span>
      <button class="lit" aria-label="Find"><svg><use href="#bino"/></svg></button>
      <span class="sep dark"></span>
      <button class="hover" aria-label="Help"><svg><use href="#book"/></svg></button>
    </div>
    <div class="frame grow">
      <div class="scroll-box">
        <div class="tree">
          <div class="root-row"><button class="expander minus" aria-label="Collapse"></button><svg><use href="#page"/></svg><span class="chosen">Model_1</span></div>
          <ul class="branches">
            <li><svg><use href="#diamond"/></svg>Aggregates</li>
            <li><svg><use href="#shapes"/></svg>Always Encrypted K...</li>
            <li><svg><use href="#tts"/></svg>Annotations</li>
            <li><svg><use href="#approle"/></svg>Application Roles</li>
            <li><svg><use href="#diamond"/></svg>Assemblies</li>
            <li><svg><use href="#keyt"/></svg>Asymmetric Keys</li>
            <li><svg><use href="#cert"/></svg>Certificates</li>
            <li><svg><use href="#cred"/></svg>Credentials</li>
            <li><svg><use href="#shapes"/></svg>Cryptographic Provid...</li>
            <li><svg><use href="#rule"/></svg>Data Movement Rul...</li>
            <li><svg><use href="#source"/></svg>Data Movement Sour...</li>
            <li><svg><use href="#shapes"/></svg>Database Audit Specifi</li>
            <li><svg><use href="#shapes"/></svg>Database Encryption K</li>
            <li><button class="expander" aria-label="Expand Database Roles"></button><svg><use href="#role"/></svg>Database Roles</li>
            <li><svg><use href="#db"/></svg>Databases</li>
            <li><svg><use href="#shapes"/></svg>Datatype Standards</li>
            <li><button class="expander" aria-label="Expand Default Values"></button><svg><use href="#defv"/></svg>Default Values</li>
            <li><button class="expander" aria-label="Expand Domains"></button><svg><use href="#domain"/></svg>Domains</li>
            <li><button class="expander" aria-label="Expand ER Diagrams"></button><svg><use href="#erd"/></svg>ER Diagrams</li>
            <li><svg><use href="#file"/></svg>Files</li>
            <li><svg><use href="#catalog"/></svg>Fulltext Catalogs</li>
            <li><svg><use href="#shapes"/></svg></li>
          </ul>
        </div>
        <div class="vbar"><svg><use href="#up"/></svg><span class="track"><span class="thumb tree-v"></span></span><svg><use href="#down"/></svg></div>
        <div class="hbar"><svg><use href="#left"/></svg><span class="track"><span class="thumb tree-h"></span></span><svg><use href="#right"/></svg><span class="corner"></span></div>
      </div>
    </div>
    <div class="tabs">
      <button class="tab current"><svg><use href="#page"/></svg>Model</button>
      <button class="tab"><svg><use href="#subj"/></svg>Subject Area</button>
    </div>
  </section>

  <section class="diagram">
    <div class="diagram-view">
      <div class="ruler"></div>
      <div class="canvas">
        <div class="node">
          <div class="node-name">testTable</div>
          <div class="node-box"><div></div><div></div></div>
          <i class="grab nw"></i><i class="grab n"></i><i class="grab ne"></i><i class="grab w"></i><i class="grab e"></i><i class="grab sw"></i><i class="grab s"></i><i class="grab se"></i>
        </div>
      </div>
      <div class="vbar"><svg><use href="#up"/></svg><span class="track"><span class="thumb full-v"></span></span><svg><use href="#down"/></svg></div>
      <div class="hbar"><svg><use href="#left"/></svg><span class="track"><span class="thumb full-h"></span></span><svg><use href="#right"/></svg><span class="corner"></span></div>
    </div>
    <div class="sheet-tabs">
      <svg class="slant" viewBox="0 0 9 20"><path d="M0 0h9v20z" fill="#fff"/><path d="M0 0l9 19" stroke="#000" fill="none"/></svg>
      <button class="sheet">ER_Diagram_163</button>
      <svg class="slant" viewBox="0 0 9 20"><path d="M0 0h9L0 20z" fill="#fff"/><path d="M9 0L0 19" stroke="#000" fill="none"/></svg>
    </div>
  </section>
</main>

<div class="docks">
  <section class="panel log-panel">
    <header class="panel-head"><h2>Action Log</h2><button aria-label="Pin"><svg><use href="#pin"/></svg></button><button aria-label="Close"><svg><use href="#x"/></svg></button></header>
    <div class="panel-tools">
      <button aria-label="Show objects"><svg><use href="#gobjs"/></svg></button>
      <span class="sep dark"></span>
      <button aria-label="Find"><svg><use href="#bino"/></svg></button>
      <button aria-label="Find next"><svg><use href="#gbino"/></svg></button>
      <span class="sep dark"></span>
      <button aria-label="Log properties"><svg><use href="#gcard"/></svg></button>
      <span class="sep dark"></span>
      <button aria-label="View details"><svg><use href="#gprev"/></svg></button>
      <span class="sep dark"></span>
      <button aria-label="Undo transactions"><svg><use href="#back"/></svg></button>
      <button aria-label="Redo transactions"><svg><use href="#ahead"/></svg></button>
      <span class="sep dark"></span>
      <button aria-label="Filter"><svg><use href="#spray"/></svg></button>
      <span class="sep dark"></span>
      <button aria-label="Help"><svg><use href="#book"/></svg></button>
    </div>
    <div class="frame grow">
      <div class="scroll-box">
        <div class="tree log">
          <div class="root-row"><button class="expander" aria-label="Expand"></button><svg><use href="#objs"/></svg><span class="chosen">Set Object Location</span></div>
          <div class="root-row"><span class="stem"></span><svg><use href="#objs"/></svg><span class="plain">Set Object Location</span></div>
        </div>
        <div class="vbar tight"><svg><use href="#up"/></svg><svg><use href="#down"/></svg></div>
        <div class="hbar"><svg><use href="#left"/></svg><span class="track"><span class="thumb log-h"></span></span><svg><use href="#right"/></svg><span class="corner"></span></div>
      </div>
    </div>
    <div class="tabs">
      <button class="tab current"><svg><use href="#objs"/></svg>Details</button>
      <button class="tab"><svg><use href="#tri"/></svg>Summary</button>
    </div>
  </section>

  <section class="panel">
    <header class="panel-head"><h2>Advisories</h2><button aria-label="Pin"><svg><use href="#pin"/></svg></button><button aria-label="Close"><svg><use href="#x"/></svg></button></header>
    <div class="panel-tools">
      <button aria-label="Save"><svg><use href="#save"/></svg></button>
      <button aria-label="Details"><svg><use href="#card"/></svg></button>
      <button aria-label="Help"><svg><use href="#book"/></svg></button>
    </div>
    <div class="advice grow"><div class="advice-row"><svg><use href="#check"/></svg><span class="chosen">Set Object Location</span></div></div>
  </section>

  <section class="panel">
    <header class="panel-head"><h2>Overview</h2><button aria-label="Pin"><svg><use href="#pin"/></svg></button><button aria-label="Close"><svg><use href="#x"/></svg></button></header>
    <div class="canvas overview grow">
      <div class="mini"><div class="mini-name">testTable</div><div class="node-box"><div></div><div></div></div></div>
    </div>
  </section>
</div>

<footer class="status">
  <span class="cell">Ready</span>
  <span class="cell"><svg><use href="#model"/></svg>Non-Mart Model</span>
  <span class="cell ruled">sa</span>
  <span class="cell ruled">SQL Server 2016/2017</span>
  <label class="cell ruled" for="zoom">110%</label>
  <span class="zoom">
    <button aria-label="Zoom out"><svg viewBox="0 0 16 16"><circle cx="8" cy="8" r="7" fill="#fafafa" stroke="#888"/><path d="M4 8h8" stroke="#000" stroke-width="2"/></svg></button>
    <input id="zoom" type="range" min="0" max="200" value="110">
    <button aria-label="Zoom in"><svg viewBox="0 0 16 16"><circle cx="8" cy="8" r="7" fill="#fafafa" stroke="#888"/><path d="M4 8h8M8 4v8" stroke="#000" stroke-width="2"/></svg></button>
  </span>
  <svg class="sizer" viewBox="0 0 12 12"><path d="M8 1h2v2H8zM8 5h2v2H8zM4 5h2v2H4zM8 9h2v2H8zM4 9h2v2H4zM0 9h2v2H0z" fill="#bbb"/></svg>
</footer>
</body>
</html>
```
FILE: styles.css
```css
* { box-sizing: border-box; }

body {
  margin: 0;
  height: 100vh;
  display: flex;
  flex-direction: column;
  padding-right: 3px;
  background: #f0f0f0;
  color: #000;
  font: 11px/16px "Open Sans", "Noto Sans", sans-serif;
  border-top: 1px solid #999;
  box-shadow: inset -3px 0 #d4d8dc;
  overflow: hidden;
}

button, select, input { font: inherit; color: inherit; margin: 0; }
button { border: 0; padding: 0; background: none; }
h1, h2, ul { margin: 0; padding: 0; font-weight: normal; }
svg { width: 16px; height: 16px; flex: none; display: block; }
.defs { position: absolute; width: 0; height: 0; }
.grow { flex: 1; min-height: 0; }

/* Title and menus */
.titlebar {
  display: flex;
  align-items: center;
  gap: 5px;
  height: 30px;
  flex: none;
  padding: 0 17px 0 8px;
  background: #fff;
}
.app-title { font-size: 11px; color: #8c8c8c; }
.window-buttons, .child-buttons { display: flex; margin-left: auto; }
.window-buttons { gap: 34px; }
.window-buttons svg { width: 12px; height: 12px; }
.menubar { display: flex; align-items: center; height: 26px; flex: none; padding-left: 4px; background: linear-gradient(90deg, #f0f0f0, #fbfbfb); }
.menubar > button { padding: 0 9px 0 8px; }
.child-buttons { gap: 6px; padding-right: 6px; }
.child-buttons svg { width: 10px; height: 10px; }

/* Toolbars */
.toolbar-row { display: flex; height: 26px; flex: none; gap: 3px; padding-left: 4px; background: linear-gradient(90deg, #f0f0f0, #fbfbfb); }
.toolbar { display: flex; align-items: center; height: 24px; background: linear-gradient(#fcfcfc, #ececec); border-radius: 2px; }
.toolbar::before { content: ""; width: 2px; height: 14px; margin: 0 2px; background: repeating-linear-gradient(#b5b5b5 0 2px, transparent 2px 4px); }
.after-break { margin-left: 103px; }
.after-gap { margin-left: 15px; }
.fill { flex: 1; }
.tool { display: flex; align-items: center; justify-content: center; width: 22px; height: 22px; flex: none; }
.picked { border: 1px solid #0078d7; background: #dcebf7; }
.drop { width: 33px; gap: 4px; }
.drop::after, .combo::after { content: ""; border: 3px solid transparent; border-top-color: #000; border-bottom: 0; }
.off::after { border-top-color: #aaa; }
.sep { width: 1px; height: 14px; flex: none; margin: 0 3px 0 2px; background: #b8b8b8; }
.more { align-self: stretch; display: flex; align-items: flex-end; justify-content: center; width: 11px; margin-left: 2px; background: linear-gradient(#f2f2f2, #a6a6a6); border-radius: 0 2px 2px 0; flex: none; }
.fill .more { margin-left: auto; }
.more svg { width: 10px; height: 10px; }
.combo { display: grid; align-items: center; height: 20px; background: #fff; }
.combo select { grid-area: 1 / 1; width: 100%; height: 20px; border: 0; padding: 0 0 0 2px; background: #fff; appearance: none; }
.combo::after { grid-area: 1 / 1; justify-self: end; margin-right: 4px; z-index: 1; }
.font-combo { width: 144px; margin-left: 2px; }
.size-combo { width: 42px; margin: 0 2px; }
.view-combo { width: 100px; }

/* Panels */
.workspace { flex: 1; display: flex; gap: 4px; min-height: 0; padding-bottom: 3px; }
.panel { display: flex; flex-direction: column; min-width: 0; min-height: 0; border: 1px solid #a0a0a0; border-top: 0; background: #f0f0f0; }
.explorer { width: 200px; flex: none; border-left-width: 0; }
.panel-head { display: flex; align-items: center; gap: 6px; height: 20px; flex: none; padding: 0 3px; border-bottom: 1px solid #a0a0a0; background: linear-gradient(90deg, #bfcddb, #d7e4f2); }
.panel-head h2 { flex: 1; font-size: 11px; }
.panel-head svg { width: 10px; height: 10px; }
.panel-tools { display: flex; align-items: center; height: 28px; flex: none; }
.panel-tools button { display: flex; align-items: center; justify-content: center; width: 23px; height: 22px; }
.panel-tools .sep { height: 18px; background: #888; }
.lit { background: #c4def6; border: 1px solid #9fcdf6; }
.panel-tools .hover { background: #d8e8f6; border: 1px solid #bbdcf7; }
.frame { margin: 0 2px; padding: 2px; border: 1px solid #dcdcdc; background: #fff; }
.explorer .frame { margin-top: 1px; }
.scroll-box { display: grid; grid-template: minmax(0, 1fr) 16px / minmax(0, 1fr) 16px; height: 100%; border: 1px solid #828790; }
.tree { overflow: hidden; font: 11px/16px "Liberation Sans", Arial, sans-serif; white-space: nowrap; }
.root-row { display: flex; align-items: center; height: 16px; padding-left: 4px; }
.root-row svg { margin: 0 3px 0 7px; }
.chosen { padding: 0 3px; background: #e2e2e2; }
.plain { padding: 0 3px; }
.expander { width: 9px; height: 9px; flex: none; border: 1px solid #919191; background: linear-gradient(#35548f, #35548f) center / 5px 1px no-repeat, linear-gradient(#35548f, #35548f) center / 1px 5px no-repeat, #f6f6f6; }
.minus { background: linear-gradient(#35548f, #35548f) center / 5px 1px no-repeat, #f6f6f6; }
.branches { list-style: none; margin-left: 28px; border-left: 1px dotted #999; }
.branches li { position: relative; display: flex; align-items: center; height: 16px; }
.branches li::before { content: ""; width: 11px; flex: none; border-top: 1px dotted #999; }
.branches li svg { margin-right: 6px; }
.branches .expander { position: absolute; left: -5px; }
.vbar, .hbar { display: flex; background: #f0f0f0; }
.vbar { flex-direction: column; align-items: center; }
.hbar { grid-column: 1 / -1; align-items: center; }
.vbar svg, .hbar svg { width: 10px; height: 10px; margin: 3px; }
.track { flex: 1; display: flex; min-width: 0; min-height: 0; }
.vbar .track { width: 100%; }
.hbar .track { height: 100%; }
.thumb { background: #cdcdcd; }
.tree-v { width: 100%; height: 45%; }
.tree-h { width: 81%; }
.full-v { width: 100%; height: 100%; }
.full-h { width: 100%; }
.log-h { width: 94%; }
.corner { width: 16px; }
.vbar.tight { justify-content: center; }
.vbar.tight svg { height: 8px; margin: 1px; }
.log { font-weight: bold; }
.log .root-row svg { margin: 0 1px 0 8px; }
.stem { width: 9px; height: 16px; flex: none; background: repeating-linear-gradient(#999 0 1px, transparent 1px 2px) center / 1px 100% no-repeat; }
.tabs { display: flex; flex: none; height: 22px; padding-left: 1px; margin-bottom: 2px; }
.tab { display: flex; align-items: center; gap: 5px; height: 21px; padding: 0 7px 0 4px; border: 1px solid #dcdcdc; border-width: 0 1px 1px 0; }
.current { background: #d9e9f8; }
.tab + .tab { padding-left: 1px; gap: 4px; }

/* Diagram window */
.diagram { flex: 1; display: flex; flex-direction: column; min-width: 0; }
.diagram-view { flex: 1; min-height: 0; display: grid; grid-template: minmax(0, 1fr) 17px / 31px minmax(0, 1fr) 17px; border: 1px solid #999; background: #f0f0f0; }
.ruler { background: #d0d0d0; border-right: 1px solid #aeb4ba; }
.canvas {
  position: relative;
  background: #edf5fc url("data:image/svg+xml,%3Csvg xmlns='http://www.w3.org/2000/svg' width='8' height='8'%3E%3Cpath d='M1 0h1v1H1zM2 1h1v1H2zM1 2h1v1H1zM6 4h1v1H6zM5 5h1v1H5zM6 6h1v1H6z' fill='%23d8e4eb'/%3E%3C/svg%3E");
}
.diagram-view > .canvas { border: solid #fff; border-width: 0 2px 2px 0; }
.node { position: absolute; left: 317px; top: 78px; width: 88px; height: 85px; padding: 6px 5px 0; }
.node-name { width: 76px; height: 17px; margin: 0 0 3px; padding-left: 1px; background: #d2d8db; font: bold 14px/17px "Liberation Sans", Arial, sans-serif; color: #222; }
.node-box { display: grid; grid-template-rows: 1fr 1fr; height: 57px; border: 1px solid #999; background: linear-gradient(#fff, #c8d5fd); box-shadow: 5px 5px #adb3b7; }
.node-box div + div { border-top: 2px solid #b5b9c8; }
.grab { position: absolute; width: 5px; height: 5px; background: #0094ff; }
.nw, .n, .ne { top: 0; }
.w, .e { top: 41px; }
.sw, .s, .se { bottom: -2px; }
.nw, .w, .sw { left: 0; }
.n, .s { left: 42px; }
.ne, .e, .se { right: 0; }
.sheet-tabs { display: flex; height: 22px; padding-left: 7px; flex: none; }
.slant { width: 9px; height: 20px; }
.sheet { height: 20px; background: #fff; border-bottom: 1px solid #888; padding: 0; }

/* Lower panels */
.docks { display: grid; grid-template: minmax(0, 1fr) / repeat(3, minmax(0, 1fr)); gap: 4px; height: 120px; flex: none; margin-top: 2px; }
.log-panel .frame { margin-top: 2px; }
.advice { border: 1px solid #828790; background: #fff; }
.advice-row { display: flex; align-items: center; gap: 3px; font: 11px/16px "Liberation Sans", Arial, sans-serif; }
.overview { display: flex; justify-content: center; align-items: center; }
.mini { width: 65px; }
.mini-name { font: bold 12px/18px "Liberation Sans", Arial, sans-serif; white-space: nowrap; padding-left: 1px; }
.mini .node-box { height: 47px; box-shadow: 4px 4px #adb3b7; }

/* Status bar */
.status { display: grid; grid-template-columns: 347fr 144fr 124fr 234fr 36px 134px 15px; align-items: center; height: 21px; flex: none; border-top: 1px solid #d0d0d0; border-bottom: 1px solid #aaa; white-space: nowrap; }
.cell { display: flex; align-items: center; gap: 3px; padding-left: 3px; height: 18px; }
.ruled { border-left: 1px solid #d0d0d0; padding-left: 5px; }
label.ruled { padding-left: 3px; }
.zoom { display: flex; align-items: center; border-left: 1px solid #ccc; }
.zoom input { flex: 1; min-width: 0; height: 16px; appearance: none; background: linear-gradient(#999, #999) center / 100% 1px no-repeat; }
.zoom input::-webkit-slider-thumb { appearance: none; width: 10px; height: 14px; background: #999; clip-path: polygon(0 0, 100% 0, 100% 70%, 50% 100%, 0 70%); box-shadow: inset 0 0 0 1px #888, inset 0 0 0 5px #f5f5f5; }
.sizer { width: 12px; height: 12px; align-self: end; }
```
